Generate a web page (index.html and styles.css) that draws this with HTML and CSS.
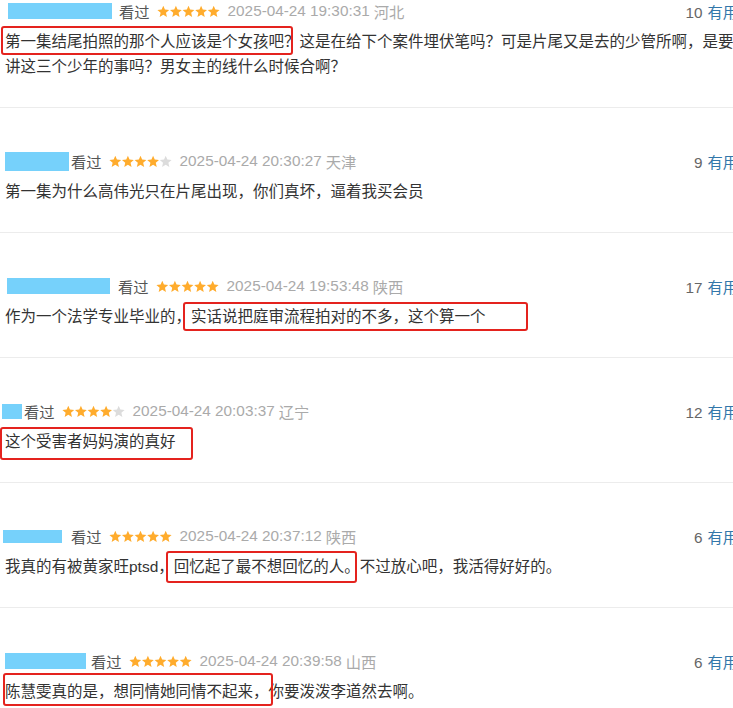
FILE: index.html
```html
<!DOCTYPE html>
<html lang="zh-CN">
<head>
<meta charset="utf-8">
<title>短评</title>
<link rel="stylesheet" href="styles.css">
</head>
<body>
<svg class="sprite" width="0" height="0" aria-hidden="true">
  <defs>
    <symbol id="star" viewBox="0 0 13 13">
      <polygon points="6.5,0.5 8.2,4.55 12.59,4.92 9.26,7.8 10.26,12.08 6.5,9.8 2.74,12.08 3.74,7.8 0.41,4.92 4.8,4.55"/>
    </symbol>
  </defs>
</svg>

<div class="list">
  <div class="item item-first">
    <div class="meta">
      <span class="mask" style="width:104px;height:16px;margin:0 7px 0 8px"></span>
      <span class="status">看过</span>
      <svg class="stars" viewBox="0 0 63 13" width="63" height="13"><use href="#star" class="on" x="0" width="12.6" height="13"/><use href="#star" class="on" x="12.6" width="12.6" height="13"/><use href="#star" class="on" x="25.2" width="12.6" height="13"/><use href="#star" class="on" x="37.8" width="12.6" height="13"/><use href="#star" class="on" x="50.4" width="12.6" height="13"/></svg>
      <span class="time">2025-04-24 19:30:31</span>
      <span class="loc">河北</span>
      <span class="votes"><span class="count">10</span><a class="useful">有用</a></span>
    </div>
    <p class="content"><span class="hl hl-a">第一集结尾拍照的那个人应该是个女孩吧？</span>这是在给下个案件埋伏笔吗？可是片尾又是去的少管所啊，是要讲这三个少年的事吗？男女主的线什么时候合啊？</p>
  </div>

  <div class="item">
    <div class="meta">
      <span class="mask" style="width:64px;height:19px;margin:0 2px 0 5px"></span>
      <span class="status">看过</span>
      <svg class="stars" viewBox="0 0 63 13" width="63" height="13"><use href="#star" class="on" x="0" width="12.6" height="13"/><use href="#star" class="on" x="12.6" width="12.6" height="13"/><use href="#star" class="on" x="25.2" width="12.6" height="13"/><use href="#star" class="on" x="37.8" width="12.6" height="13"/><use href="#star" class="off" x="50.4" width="12.6" height="13"/></svg>
      <span class="time">2025-04-24 20:30:27</span>
      <span class="loc">天津</span>
      <span class="votes"><span class="count">9</span><a class="useful">有用</a></span>
    </div>
    <p class="content">第一集为什么高伟光只在片尾出现，你们真坏，逼着我买会员</p>
  </div>

  <div class="item">
    <div class="meta">
      <span class="mask" style="width:103px;height:16px;margin:0 8px 0 7px"></span>
      <span class="status">看过</span>
      <svg class="stars" viewBox="0 0 63 13" width="63" height="13"><use href="#star" class="on" x="0" width="12.6" height="13"/><use href="#star" class="on" x="12.6" width="12.6" height="13"/><use href="#star" class="on" x="25.2" width="12.6" height="13"/><use href="#star" class="on" x="37.8" width="12.6" height="13"/><use href="#star" class="on" x="50.4" width="12.6" height="13"/></svg>
      <span class="time">2025-04-24 19:53:48</span>
      <span class="loc">陕西</span>
      <span class="votes"><span class="count">17</span><a class="useful">有用</a></span>
    </div>
    <p class="content">作为一个法学专业毕业的，<span class="hl hl-b">实话说把庭审流程拍对的不多，这个算一个</span></p>
  </div>

  <div class="item">
    <div class="meta">
      <span class="mask" style="width:20px;height:15px;margin:0 2px 0 2px"></span>
      <span class="status">看过</span>
      <svg class="stars" viewBox="0 0 63 13" width="63" height="13"><use href="#star" class="on" x="0" width="12.6" height="13"/><use href="#star" class="on" x="12.6" width="12.6" height="13"/><use href="#star" class="on" x="25.2" width="12.6" height="13"/><use href="#star" class="on" x="37.8" width="12.6" height="13"/><use href="#star" class="off" x="50.4" width="12.6" height="13"/></svg>
      <span class="time">2025-04-24 20:03:37</span>
      <span class="loc">辽宁</span>
      <span class="votes"><span class="count">12</span><a class="useful">有用</a></span>
    </div>
    <p class="content"><span class="hl hl-c">这个受害者妈妈演的真好</span></p>
  </div>

  <div class="item">
    <div class="meta">
      <span class="mask" style="width:59px;height:13px;margin:0 9px 0 3px"></span>
      <span class="status">看过</span>
      <svg class="stars" viewBox="0 0 63 13" width="63" height="13"><use href="#star" class="on" x="0" width="12.6" height="13"/><use href="#star" class="on" x="12.6" width="12.6" height="13"/><use href="#star" class="on" x="25.2" width="12.6" height="13"/><use href="#star" class="on" x="37.8" width="12.6" height="13"/><use href="#star" class="on" x="50.4" width="12.6" height="13"/></svg>
      <span class="time">2025-04-24 20:37:12</span>
      <span class="loc">陕西</span>
      <span class="votes"><span class="count">6</span><a class="useful">有用</a></span>
    </div>
    <p class="content">我真的有被黄家旺ptsd，<span class="hl hl-d">回忆起了最不想回忆的人。</span>不过放心吧，我活得好好的。</p>
  </div>

  <div class="item">
    <div class="meta">
      <span class="mask" style="width:81px;height:16px;margin:0 5px 0 5px"></span>
      <span class="status">看过</span>
      <svg class="stars" viewBox="0 0 63 13" width="63" height="13"><use href="#star" class="on" x="0" width="12.6" height="13"/><use href="#star" class="on" x="12.6" width="12.6" height="13"/><use href="#star" class="on" x="25.2" width="12.6" height="13"/><use href="#star" class="on" x="37.8" width="12.6" height="13"/><use href="#star" class="on" x="50.4" width="12.6" height="13"/></svg>
      <span class="time">2025-04-24 20:39:58</span>
      <span class="loc">山西</span>
      <span class="votes"><span class="count">6</span><a class="useful">有用</a></span>
    </div>
    <p class="content"><span class="hl hl-e">陈慧雯真的是，想同情她同情不起来，</span>你要泼泼李道然去啊。</p>
  </div>
</div>
</body>
</html>
```

FILE: styles.css
```css
html, body {
  margin: 0;
  padding: 0;
  overflow: hidden;
  background: #fff;
}

body {
  font-family: "Liberation Sans", "Noto Sans CJK SC", sans-serif;
  color: #333;
}

.sprite {
  display: block;
  width: 0;
  height: 0;
  overflow: hidden;
}

.list {
  width: 740px;
}

.item {
  padding: 43px 0 28px;
  border-bottom: 1px solid #ececec;
}

.item-first {
  padding-top: 1px;
}

.meta {
  display: flex;
  align-items: center;
  height: 20px;
  padding-right: 2px;
  font-size: 15.3px;
  white-space: nowrap;
}

.mask {
  display: block;
  flex: none;
  background: #76d1fb;
}

.status {
  color: #555;
}

.stars {
  flex: none;
  margin: 0 8px 0 7px;
}

.stars .on {
  fill: #ffac2d;
}

.stars .off {
  fill: #dcdcdc;
}

.time {
  color: #aaa;
}

.loc {
  color: #aaa;
  margin-left: 4px;
}

.votes {
  margin-left: auto;
  color: #666;
}

.useful {
  color: #37a;
  margin-left: 5px;
}

.content {
  margin: 8px 0 0;
  padding-left: 5px;
  font-size: 15.5px;
  line-height: 25px;
  color: #333;
}

.hl {
  position: relative;
  display: inline-block;
}

.hl::after {
  content: "";
  position: absolute;
  border: 2px solid #e4231e;
  border-radius: 3px;
  pointer-events: none;
}

.hl-a::after { top: -3px; bottom: -1px; left: -4px; right: 6.5px; }
.hl-b::after { top: -2px; bottom: -2px; left: -8px; right: -42.5px; }
.hl-c::after { top: -2px; bottom: -6px; left: -5px; right: -17.5px; }
.hl-d::after { top: -3px; bottom: -4px; left: -8px; right: 3px; }
.hl-e::after { top: -6px; bottom: -2px; left: -2px; right: -4.5px; }
```
